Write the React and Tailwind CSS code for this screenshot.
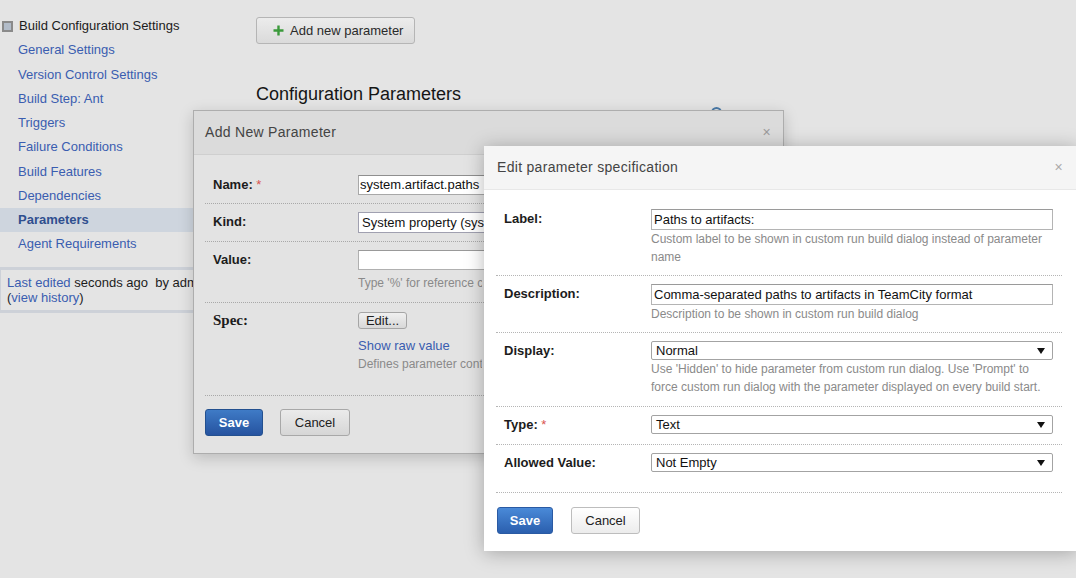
import React from "react";

const FONT = "font-['Liberation_Sans',Arial,sans-serif]";

function Arrow() {
  return (
    <svg width="8" height="6" viewBox="0 0 8 6" className="shrink-0">
      <path d="M0 0 H8 L4 6 Z" fill="#111" />
    </svg>
  );
}

function Select({ value, className = "" }) {
  return (
    <div className={`flex items-center justify-between border border-[#a3a3a3] rounded-[2px] bg-white h-[19px] pl-[4px] pr-[7px] text-[13px] text-[#111] ${className}`}>
      <span>{value}</span>
      <Arrow />
    </div>
  );
}

function Input({ value, className = "" }) {
  return (
    <div className={`flex items-center border border-[#b4b4b4] border-t-[#9a9a9a] bg-white h-[21px] pl-[2px] text-[13px] text-[#111] whitespace-nowrap overflow-hidden ${className}`}>
      {value}
    </div>
  );
}

function SaveBtn({ dim }) {
  return (
    <div
      className={`flex items-center justify-center h-[27px] rounded-[3px] border text-[13px] font-bold text-white ${
        dim
          ? "w-[58px] border-[#23508f] bg-gradient-to-b from-[#3f7bc6] to-[#2653a0]"
          : "w-[56px] border-[#2a5aa3] bg-gradient-to-b from-[#4a8ad8] to-[#2b5fae]"
      }`}
    >
      Save
    </div>
  );
}

function CancelBtn({ dim }) {
  return (
    <div
      className={`flex items-center justify-center h-[27px] rounded-[3px] border text-[13px] text-[#222] ${
        dim
          ? "w-[70px] border-[#a8a8a8] bg-gradient-to-b from-[#ebebeb] to-[#d6d6d6]"
          : "w-[69px] border-[#bdbdbd] bg-gradient-to-b from-[#ffffff] to-[#ececec]"
      }`}
    >
      Cancel
    </div>
  );
}

const sideItems = [
  "General Settings",
  "Version Control Settings",
  "Build Step: Ant",
  "Triggers",
  "Failure Conditions",
  "Build Features",
  "Dependencies",
  "Parameters",
  "Agent Requirements",
];

export default function App() {
  return (
    <div className={`relative w-[1076px] h-[578px] overflow-hidden bg-[#e4e4e4] ${FONT}`}>
      {/* page */}
      <div className="flex">
        {/* sidebar */}
        <div className="w-[240px] shrink-0 pt-[14px]">
          <div className="flex items-center h-[24px] text-[13px] text-[#1c1c1c]">
            <div className="ml-[2px] mr-[6px] w-[11px] h-[11px] border-[2px] border-[#8a8a8a] bg-[#b2bcc9]" />
            Build Configuration Settings
          </div>
          {sideItems.map((it) => (
            <div
              key={it}
              className={`flex items-center h-[24.25px] pl-[18px] text-[13px] ${
                it === "Parameters" ? "bg-[#ced5de] font-bold text-[#2f4f8f]" : "text-[#3a5db0]"
              }`}
            >
              {it}
            </div>
          ))}
          <div className="mt-[11px] border-y-[3px] border-l-[1px] border-[#cdd1d8] pl-[6px] py-[5px] text-[13px] leading-[15px] text-[#1c1c1c] whitespace-nowrap">
            <div>
              <span className="text-[#3a5db0]">Last edited</span> seconds ago&nbsp; by admin
            </div>
            <div>
              (<span className="text-[#3a5db0]">view history</span>)
            </div>
          </div>
        </div>

        {/* main */}
        <div className="pl-[16px] pt-[17px] flex-1">
          <div className="flex items-center w-[159px] h-[27px] rounded-[3px] border border-[#b5b5b5] bg-gradient-to-b from-[#ececec] to-[#dadada] pl-[16px] text-[13px] text-[#2a2a2a]">
            <svg width="11" height="11" viewBox="0 0 11 11" className="mr-[6px]">
              <path d="M5.5 0.5 V10.5 M0.5 5.5 H10.5" stroke="#3b9a3b" strokeWidth="2.4" />
            </svg>
            Add new parameter
          </div>
          <div className="mt-[40px] text-[18px] leading-[21px] text-[#151515]">Configuration Parameters</div>
          <div className="w-[466px] flex justify-end mt-[2px]">
            <div className="w-[11px] h-[11px] rounded-full border-[2px] border-[#4a7aa8]" />
          </div>
        </div>
      </div>

      {/* Dialog 1 */}
      <div className="absolute left-[193px] top-[110px] w-[591px] h-[344px] border border-[#adadad] bg-[#e3e3e3] shadow-[0_4px_14px_rgba(0,0,0,0.18)]">
        <div className="relative flex items-center h-[44px] bg-[#dbdbdb] border-b border-[#cfcfcf] pl-[11px] text-[14px] tracking-[0.3px] text-[#444]">
          Add New Parameter
          <span className="absolute right-[12px] top-[11px] text-[14px] text-[#9a9a9a]">×</span>
        </div>
        <div className="px-[11px] pt-[12px]">
          <div className="flex pl-2 pt-2 pb-2 border-b border-dotted border-[#a9a9a9]">
            <div className="w-[145px] leading-[20px] text-[13px] font-bold text-[#1c1c1c]">
              Name: <span className="text-[#d9534f] font-normal">*</span>
            </div>
            <div className="flex items-center border border-[#a8a8a8] border-t-[#8f8f8f] bg-white h-[20px] w-[300px] pl-[1px] text-[13px] text-[#111] overflow-hidden whitespace-nowrap">
              <span className="block w-[124px] overflow-hidden">system.artifact.paths</span>
            </div>
          </div>
          <div className="flex pl-2 pt-2 pb-2 border-b border-dotted border-[#a9a9a9]">
            <div className="w-[145px] leading-[20px] text-[13px] font-bold text-[#1c1c1c]">Kind:</div>
            <div className="flex items-center border border-[#a0a0b0] bg-white h-[21px] w-[300px] pl-[3px] text-[13px] text-[#111] overflow-hidden whitespace-nowrap">
              <span className="block w-[122px] overflow-hidden">System property (system.)</span>
            </div>
          </div>
          <div className="flex pl-2 pt-2 pb-[10px] border-b border-dotted border-[#a9a9a9]">
            <div className="w-[145px] leading-[20px] text-[13px] font-bold text-[#1c1c1c]">Value:</div>
            <div>
              <div className="border border-[#b0b0b0] border-t-[#999] bg-white h-[20px] w-[300px]" />
              <div className="mt-[4px] w-[124px] overflow-hidden text-[12px] leading-[18px] text-[#8a8a8a] whitespace-nowrap">
                Type '%' for reference completion
              </div>
            </div>
          </div>
          <div className="flex pl-2 pt-[9px] pb-[22px] border-b border-dotted border-[#a9a9a9]">
            <div className="w-[145px] leading-[17px] text-[15px] font-bold text-[#1c1c1c] font-['Liberation_Serif',serif]">Spec:</div>
            <div>
              <div className="flex items-center justify-center w-[49px] h-[17px] rounded-[3px] border border-[#a5a5a5] bg-gradient-to-b from-[#f0f0f0] to-[#d8d8d8] text-[13px] text-[#222]">
                Edit...
              </div>
              <div className="mt-[8px] text-[13px] leading-[18px] text-[#3a5db0]">Show raw value</div>
              <div className="w-[124px] overflow-hidden text-[12px] leading-[18px] text-[#8a8a8a] whitespace-nowrap">Defines parameter control presentation</div>
            </div>
          </div>
        </div>
        <div className="flex gap-[17px] pl-[11px] pt-[13px]">
          <SaveBtn dim />
          <CancelBtn dim />
        </div>
      </div>

      {/* Dialog 2 */}
      <div className="absolute left-[484px] top-[146px] w-[594px] h-[405px] bg-white shadow-[0_2px_18px_rgba(0,0,0,0.28)]">
        <div className="relative flex items-center h-[44px] bg-[#f5f5f5] border-b border-[#e8e8e8] pl-[13px] text-[14px] tracking-[0.3px] text-[#444]">
          Edit parameter specification
          <span className="absolute right-[15px] top-[11px] text-[14px] text-[#aaa]">×</span>
        </div>
        <div className="pl-[12px] pr-[16px] pt-[11px]">
          <div className="flex pl-2 pt-2 pb-[9px] border-b border-dotted border-[#b5b5b5]">
            <div className="w-[147px] leading-[19px] text-[13px] font-bold text-[#1c1c1c]">Label:</div>
            <div className="w-[402px]">
              <Input value="Paths to artifacts:" />
              <div className="text-[12px] leading-[18px] text-[#8a8a8a]">
                Custom label to be shown in custom run build dialog instead of parameter name
              </div>
            </div>
          </div>
          <div className="flex pl-2 pt-2 pb-[9px] border-b border-dotted border-[#b5b5b5]">
            <div className="w-[147px] leading-[19px] text-[13px] font-bold text-[#1c1c1c]">Description:</div>
            <div className="w-[402px]">
              <Input value="Comma-separated paths to artifacts in TeamCity format" />
              <div className="text-[12px] leading-[18px] text-[#8a8a8a]">Description to be shown in custom run build dialog</div>
            </div>
          </div>
          <div className="flex pl-2 pt-2 pb-[10px] border-b border-dotted border-[#b5b5b5]">
            <div className="w-[147px] leading-[19px] text-[13px] font-bold text-[#1c1c1c]">Display:</div>
            <div className="w-[402px]">
              <Select value="Normal" />
              <div className="text-[12px] leading-[18px] text-[#8a8a8a]">
                Use 'Hidden' to hide parameter from custom run dialog. Use 'Prompt' to force custom run dialog with the parameter displayed on every build start.
              </div>
            </div>
          </div>
          <div className="flex pl-2 pt-2 pb-[10px] border-b border-dotted border-[#b5b5b5]">
            <div className="w-[147px] leading-[19px] text-[13px] font-bold text-[#1c1c1c]">
              Type: <span className="text-[#d9534f] font-normal">*</span>
            </div>
            <div className="w-[402px]">
              <Select value="Text" />
            </div>
          </div>
          <div className="flex pl-2 pt-2 pb-[20px] border-b border-dotted border-[#b5b5b5]">
            <div className="w-[147px] leading-[19px] text-[13px] font-bold text-[#1c1c1c]">Allowed Value:</div>
            <div className="w-[402px]">
              <Select value="Not Empty" />
            </div>
          </div>
        </div>
        <div className="flex gap-[18px] pl-[13px] pt-[14px]">
          <SaveBtn />
          <CancelBtn />
        </div>
      </div>
    </div>
  );
}
